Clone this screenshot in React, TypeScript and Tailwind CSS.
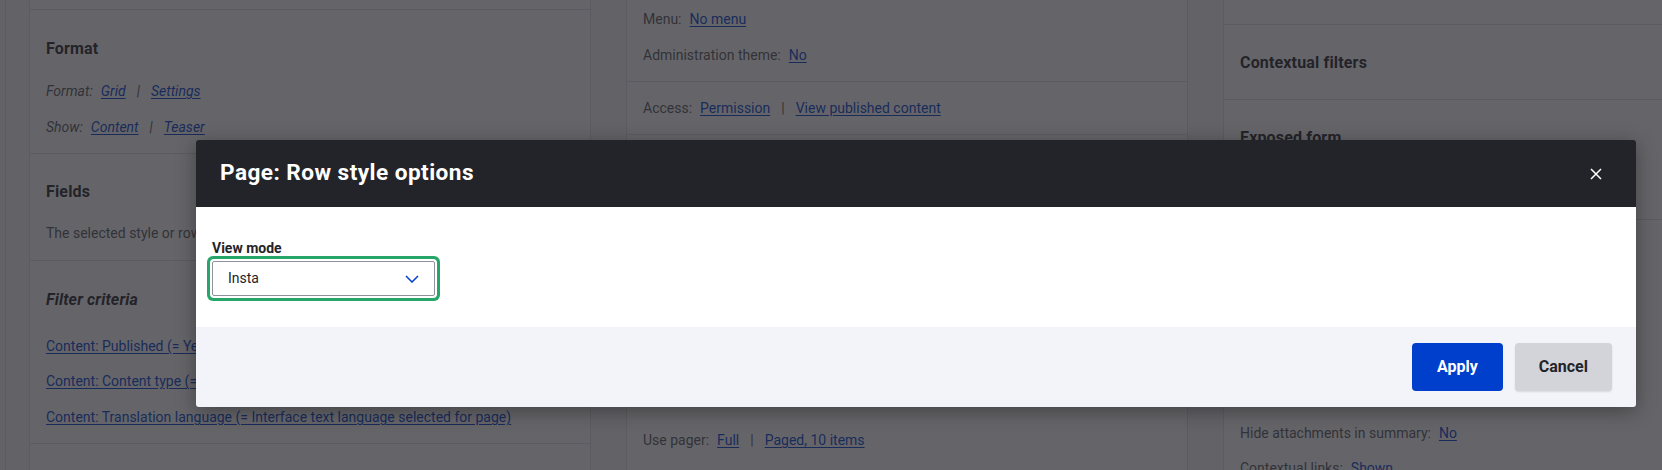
import React from "react";

function Lnk({ children }: { children: React.ReactNode }) {
    return (
        <a href="#" className="text-[#003ecc] underline underline-offset-2">
            {children}
        </a>
    );
}

function Sep() {
    return <span className="mx-[11px] text-[#55565b]">|</span>;
}

function Heading({ children, italic }: { children: React.ReactNode; italic?: boolean }) {
    return (
        <h3 className={`text-base leading-6 font-bold tracking-[0.01em] text-[#232429] ${italic ? "italic" : ""}`}>
            {children}
        </h3>
    );
}

function Line({ children, className = "" }: { children: React.ReactNode; className?: string }) {
    return (
        <p className={`text-[14px] leading-5 text-[#55565b] whitespace-nowrap ${className}`}>
            {children}
        </p>
    );
}

function Column({ children }: { children: React.ReactNode }) {
    return (
        <div className="w-[562px] shrink-0 bg-white border-x border-[#dedfe4] flex flex-col">
            {children}
        </div>
    );
}

function App() {
    return (
        <div className="relative h-[470px] w-full overflow-hidden bg-[#f3f4f9] font-['Roboto','Liberation_Sans',sans-serif]">
            {/* page behind the dialog */}
            <div className="ml-[5px] h-full border-l border-[#dedfe4] pl-[23px] flex gap-[35px]">
                {/* first column */}
                <Column>
                    <div className="h-[10px] shrink-0 border-b border-[#dedfe4]" />
                    <section className="h-[144px] shrink-0 border-b border-[#dedfe4] px-4 pt-[27px]">
                        <Heading>Format</Heading>
                        <Line className="mt-[20px] italic">
                            <span className="mr-[8px]">Format:</span>
                            <Lnk>Grid</Lnk>
                            <Sep />
                            <Lnk>Settings</Lnk>
                        </Line>
                        <Line className="mt-[16px] italic">
                            <span className="mr-[8px]">Show:</span>
                            <Lnk>Content</Lnk>
                            <Sep />
                            <Lnk>Teaser</Lnk>
                        </Line>
                    </section>
                    <section className="h-[107px] shrink-0 border-b border-[#dedfe4] px-4 pt-[26px]">
                        <Heading>Fields</Heading>
                        <Line className="mt-[19px]">
                            The selected style or row format does not use fields.
                        </Line>
                    </section>
                    <section className="h-[183px] shrink-0 border-b border-[#dedfe4] px-4 pt-[27px]">
                        <Heading italic>Filter criteria</Heading>
                        <Line className="mt-[24px]">
                            <Lnk>Content: Published (= Yes)</Lnk>
                        </Line>
                        <Line className="mt-[15px]">
                            <Lnk>Content: Content type (= Article)</Lnk>
                        </Line>
                        <Line className="mt-[16px]">
                            <Lnk>Content: Translation language (= Interface text language selected for page)</Lnk>
                        </Line>
                    </section>
                </Column>

                {/* second column */}
                <Column>
                    <section className="h-[82px] shrink-0 border-b border-[#dedfe4] px-4 pt-[9px]">
                        <Line>
                            <span className="mr-2">Menu:</span>
                            <Lnk>No menu</Lnk>
                        </Line>
                        <Line className="mt-4">
                            <span className="mr-2">Administration theme:</span>
                            <Lnk>No</Lnk>
                        </Line>
                    </section>
                    <section className="h-[53px] shrink-0 border-b border-[#dedfe4] px-4 pt-4">
                        <Line>
                            <span className="mr-2">Access:</span>
                            <Lnk>Permission</Lnk>
                            <Sep />
                            <Lnk>View published content</Lnk>
                        </Line>
                    </section>
                    <section className="h-[150px] shrink-0 border-b border-[#dedfe4]" />
                    <section className="px-4 pt-[145px]">
                        <Line>
                            <span className="mr-2">Use pager:</span>
                            <Lnk>Full</Lnk>
                            <Sep />
                            <Lnk>Paged, 10 items</Lnk>
                        </Line>
                    </section>
                </Column>

                {/* third column */}
                <Column>
                    <div className="h-[25px] shrink-0 border-b border-[#dedfe4]" />
                    <section className="h-[75px] shrink-0 border-b border-[#dedfe4] px-4 pt-[26px]">
                        <Heading>Contextual filters</Heading>
                    </section>
                    <section className="h-[120px] shrink-0 border-b border-[#dedfe4] px-4 pt-[26px]">
                        <Heading>Exposed form</Heading>
                    </section>
                    <section className="px-4 pt-[203px]">
                        <Line>
                            <span className="mr-2">Hide attachments in summary:</span>
                            <Lnk>No</Lnk>
                        </Line>
                        <Line className="mt-[15px]">
                            <span className="mr-2">Contextual links:</span>
                            <Lnk>Shown</Lnk>
                        </Line>
                    </section>
                </Column>
            </div>

            {/* overlay */}
            <div className="absolute inset-0 bg-[#232429]/70" />

            {/* dialog */}
            <div className="absolute left-[196px] top-[140px] w-[1440px] rounded-[3px] overflow-hidden shadow-[0_4px_20px_rgba(0,0,0,0.35)]">
                <div className="h-[67px] bg-[#232429] flex items-center justify-between pl-6 pr-[28px]">
                    <h2 className="text-[22.6px] leading-none font-bold tracking-[0.02em] text-white">Page: Row style options</h2>
                    <button type="button" className="w-6 h-6 flex items-center justify-center" aria-label="Close">
                        <svg width="12" height="12" viewBox="0 0 12 12" fill="none">
                            <path d="M1 1L11 11M11 1L1 11" stroke="#ffffff" strokeWidth="1.5" />
                        </svg>
                    </button>
                </div>

                <div className="h-[120px] bg-white px-4 pt-[31px]">
                    <label className="block text-[14px] leading-5 font-bold text-[#232429]">View mode</label>
                    <div className="mt-[3px] w-[223px] h-[35px] border border-[#8e929c] rounded-[2px] bg-white shadow-[0_0_0_2px_#ffffff,0_0_0_5px_#26a769] flex items-center justify-between pl-[15px] pr-[15px] text-[14px] text-[#232429]">
                        <span>Insta</span>
                        <svg width="14" height="8" viewBox="0 0 14 8" fill="none">
                            <path d="M1 1L7 7L13 1" stroke="#003ecc" strokeWidth="1.5" />
                        </svg>
                    </div>
                </div>

                <div className="h-[80px] bg-[#f3f4f9] flex items-center justify-end gap-3 pr-6">
                    <button type="button" className="h-12 px-[25px] rounded-[4px] bg-[#003ecc] text-white text-base font-bold">
                        Apply
                    </button>
                    <button type="button" className="h-12 px-6 rounded-[4px] bg-[#d3d4d9] text-[#232429] text-base font-bold shadow-[0_1px_2px_rgba(0,0,0,0.12)]">
                        Cancel
                    </button>
                </div>
            </div>
        </div>
    );
}

export default App;
